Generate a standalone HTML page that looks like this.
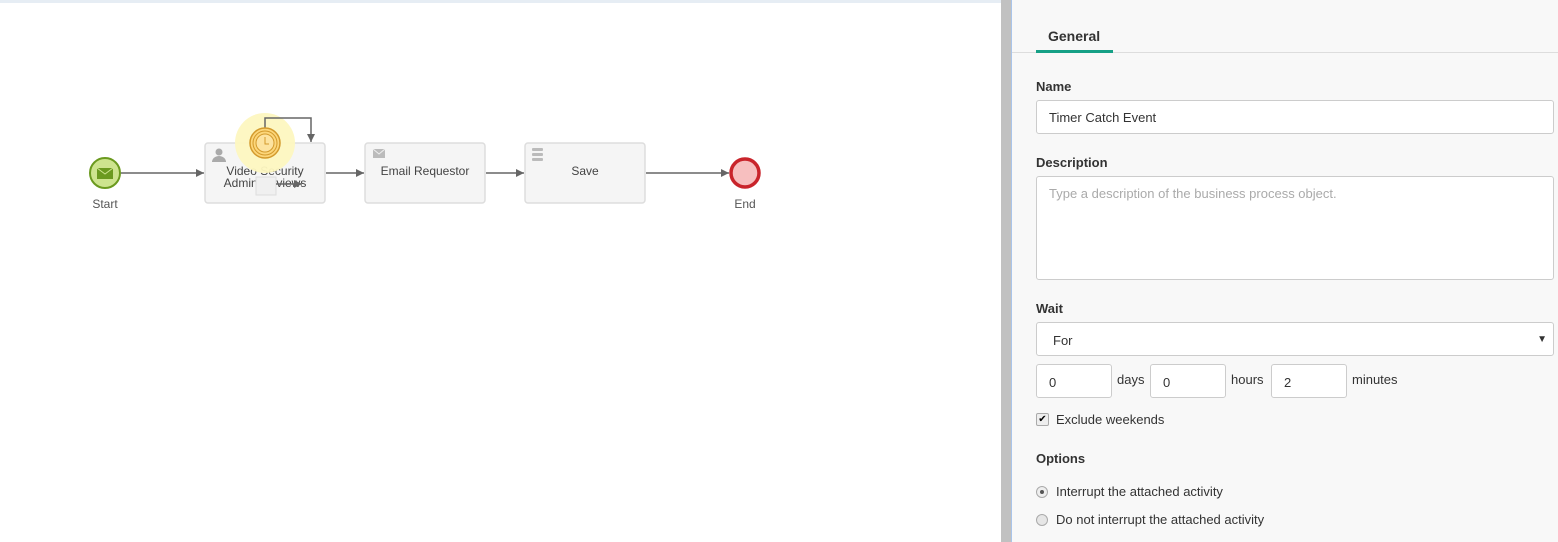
<!DOCTYPE html>
<html><head><style>
body{margin:0;width:1558px;height:542px;overflow:hidden;font-family:"Liberation Sans",sans-serif;background:#fff;position:relative}
.a{position:absolute}
.panel{left:1011px;top:0;width:547px;height:542px;background:#f8f8f8;border-left:1px solid #a9c4ea}
.lbl{font-size:13px;font-weight:bold;color:#333}
.inp{background:#fff;border:1px solid #ccc;border-radius:3px;box-sizing:border-box;font-size:13px;color:#333}
.t{font-size:13px;color:#333}
</style></head><body>
<div class="a" style="left:0;top:0;width:1001px;height:3px;background:#e6edf4"></div>
<div class="a" style="left:1001px;top:0;width:10px;height:542px;background:#c1c1c1"></div>
<svg class="a" style="left:0;top:0" width="1000" height="542">
<defs><marker id="ar" markerUnits="userSpaceOnUse" markerWidth="9" markerHeight="9" refX="8" refY="4.5" orient="auto"><path d="M0,0.5 L8,4.5 L0,8.5z" fill="#666"/></marker></defs>
<g stroke="#666" stroke-width="1.5" fill="none">
<line x1="121" y1="173" x2="204" y2="173" marker-end="url(#ar)"/>
<line x1="326" y1="173" x2="364" y2="173" marker-end="url(#ar)"/>
<line x1="486" y1="173" x2="524" y2="173" marker-end="url(#ar)"/>
<line x1="646" y1="173" x2="729" y2="173" marker-end="url(#ar)"/>
</g>
<g fill="#f5f5f5" stroke="#ddd" stroke-width="1.5">
<rect x="205" y="143" width="120" height="60" rx="3"/>
<rect x="365" y="143" width="120" height="60" rx="3"/>
<rect x="525" y="143" width="120" height="60" rx="3"/>
</g>
<circle cx="105" cy="173" r="15" fill="#cde48e" stroke="#6b9a1f" stroke-width="2"/>
<rect x="97" y="168" width="16" height="11" fill="#6b9a1f"/><path d="M97,168 L105,174 L113,168" stroke="#cde48e" fill="none"/>
<circle cx="745" cy="173" r="14" fill="#f7bfbf" stroke="#c9242b" stroke-width="3.5"/>
<text x="105" y="208" font-size="12" fill="#555" text-anchor="middle">Start</text>
<text x="745" y="208" font-size="12" fill="#555" text-anchor="middle">End</text>
<text x="425" y="175" font-size="12" fill="#444" text-anchor="middle">Email Requestor</text>
<text x="585" y="175" font-size="12" fill="#444" text-anchor="middle">Save</text>
<text x="265" y="175" font-size="12" fill="#444" text-anchor="middle">Video Security</text>
<text x="265" y="187" font-size="12" fill="#444" text-anchor="middle">Admin Reviews</text>
<circle cx="219" cy="152" r="3.5" fill="#aaa"/><path d="M212,162 a7,6 0 0 1 14,0z" fill="#aaa"/>
<rect x="373" y="149" width="12" height="9" fill="#bbb"/><path d="M373,149 L379,154 L385,149" stroke="#eee" fill="none"/>
<rect x="532" y="148" width="11" height="3" rx="1" fill="#bbb"/><rect x="532" y="153" width="11" height="3" rx="1" fill="#bbb"/><rect x="532" y="158" width="11" height="3" rx="1" fill="#bbb"/>
<rect x="256" y="177" width="20" height="18" fill="#f0f0f0" stroke="#ddd"/>
<path d="M276,184 L302,184" stroke="#666" stroke-width="1.5" marker-end="url(#ar)"/>
<circle cx="265" cy="143" r="30" fill="#fdf7c0" opacity="0.95"/>
<path d="M265,128 V118 H311 V142" stroke="#666" stroke-width="1.5" fill="none" marker-end="url(#ar)"/>
<circle cx="265" cy="143" r="15" fill="#fcd67a" stroke="#d39a2c" stroke-width="1.5"/>
<circle cx="265" cy="143" r="12" fill="none" stroke="#d39a2c"/>
<circle cx="265" cy="143" r="9" fill="#fde3a0" stroke="#d39a2c"/>
<path d="M265,137 V144 H269" stroke="#d39a2c" fill="none"/>
</svg>
<div class="a panel"></div>
<div class="a" style="left:1012px;top:52px;width:546px;height:1px;background:#ddd"></div>
<div class="a" style="left:1048px;top:28px;font-size:14px;color:#333;font-weight:bold">General</div>
<div class="a" style="left:1036px;top:50px;width:77px;height:3px;background:#16a086"></div>
<div class="a lbl" style="left:1036px;top:79px">Name</div>
<div class="a inp" style="left:1036px;top:100px;width:518px;height:34px;padding:9px 12px">Timer Catch Event</div>
<div class="a lbl" style="left:1036px;top:155px">Description</div>
<div class="a inp" style="left:1036px;top:176px;width:518px;height:104px;padding:9px 12px;color:#aaa">Type a description of the business process object.</div>
<div class="a lbl" style="left:1036px;top:301px">Wait</div>
<div class="a inp" style="left:1036px;top:322px;width:518px;height:34px;padding:10px 16px">For<span style="position:absolute;right:6px;top:11px;font-size:10px">▼</span></div>
<div class="a inp" style="left:1036px;top:364px;width:76px;height:34px;padding:10px 12px">0</div>
<div class="a t" style="left:1117px;top:372px">days</div>
<div class="a inp" style="left:1150px;top:364px;width:76px;height:34px;padding:10px 12px">0</div>
<div class="a t" style="left:1231px;top:372px">hours</div>
<div class="a inp" style="left:1271px;top:364px;width:76px;height:34px;padding:10px 12px">2</div>
<div class="a t" style="left:1352px;top:372px">minutes</div>
<div class="a" style="left:1036px;top:413px;width:11px;height:11px;border:1px solid #aaa;border-radius:2px;background:#eee;font-size:10px;line-height:11px;text-align:center">✔</div>
<div class="a t" style="left:1056px;top:412px">Exclude weekends</div>
<div class="a lbl" style="left:1036px;top:451px">Options</div>
<div class="a" style="left:1036px;top:486px;width:10px;height:10px;border:1px solid #aaa;border-radius:50%;background:#eee"><div style="margin:3px;width:4px;height:4px;border-radius:50%;background:#555"></div></div>
<div class="a t" style="left:1056px;top:484px">Interrupt the attached activity</div>
<div class="a" style="left:1036px;top:514px;width:10px;height:10px;border:1px solid #aaa;border-radius:50%;background:#e6e6e6"></div>
<div class="a t" style="left:1056px;top:512px">Do not interrupt the attached activity</div>
</body></html>
